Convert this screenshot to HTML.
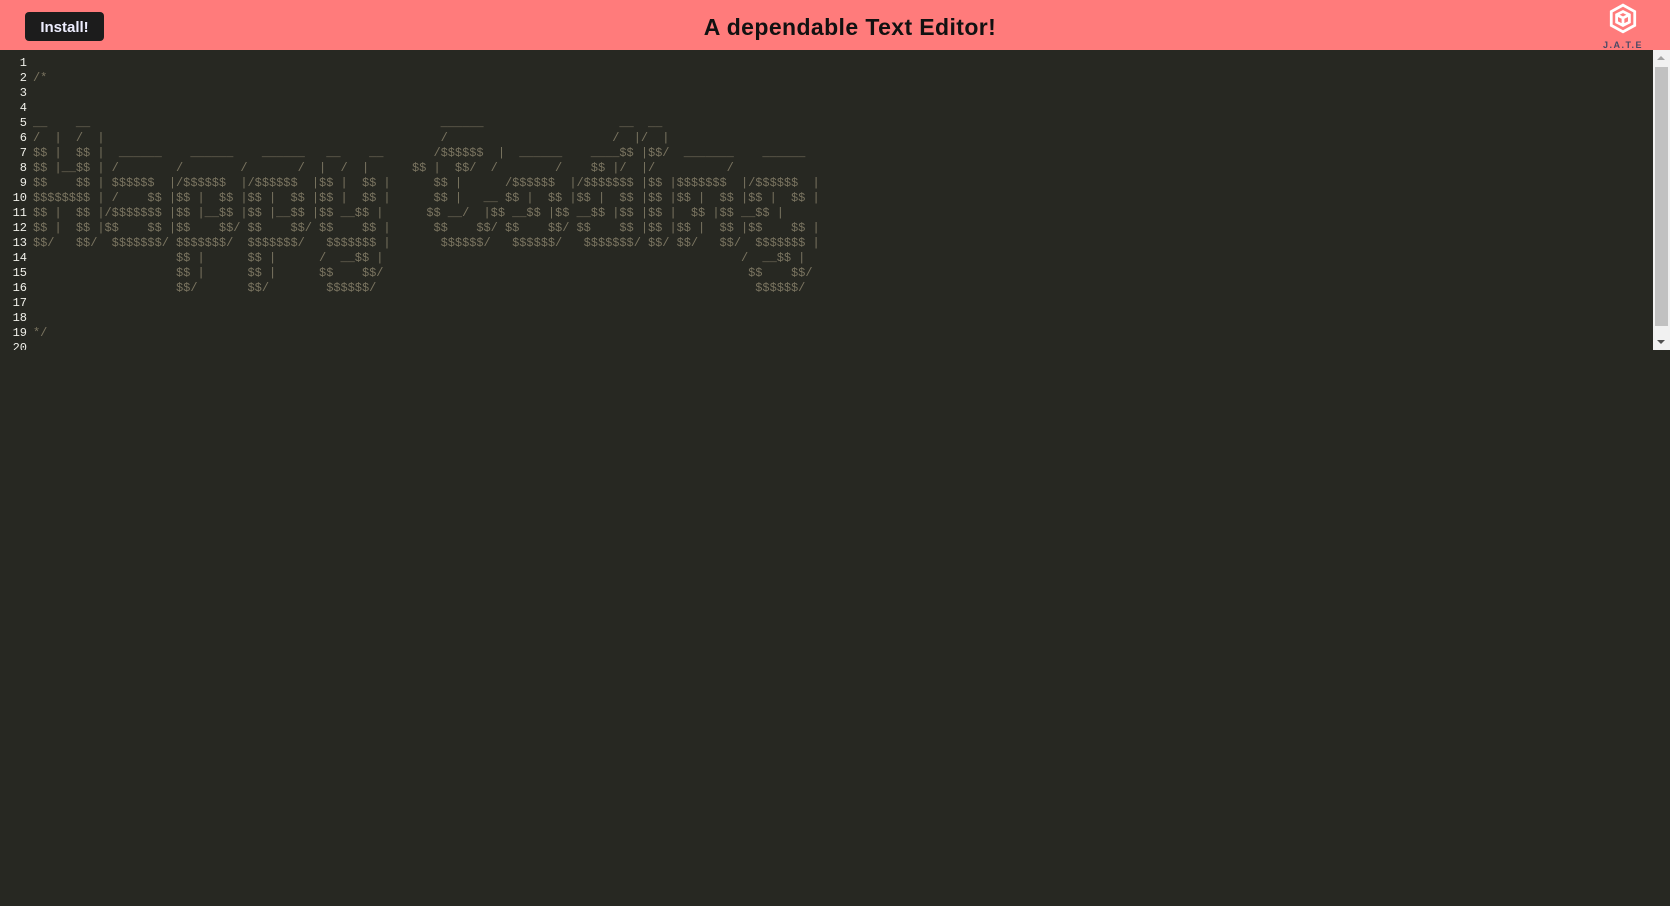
<!DOCTYPE html>
<html><head><meta charset="utf-8"><style>
html,body{margin:0;padding:0;width:1670px;height:906px;overflow:hidden;background:#272822;}
.hdr{position:absolute;left:0;top:0;width:1670px;height:50px;background:#ff7b7b;}
.btn{position:absolute;left:25px;top:12px;width:79px;height:29px;background:#1c1c1c;border-radius:4px;color:#eef;font:bold 15px "Liberation Sans",sans-serif;line-height:31px;text-align:center;}
.title{position:absolute;left:0;width:1700px;top:14px;text-align:center;font:bold 23px "Liberation Sans",sans-serif;color:#111;letter-spacing:0.4px;}
.logo{position:absolute;left:1598px;top:3px;width:50px;text-align:center;}
.jate{font:bold 9px "Liberation Sans",sans-serif;color:#4a4a66;letter-spacing:1.5px;margin-top:0px;}
.ed{position:absolute;left:0;top:50px;width:1653px;height:300px;overflow:hidden;}
.gut{position:absolute;left:0;top:6px;width:27px;text-align:right;font:12px/15px "Liberation Mono",monospace;color:#f0f0ea;white-space:pre;}
.code{position:absolute;left:33px;top:6px;font:12px/15px "Liberation Mono",monospace;color:#7a7460;white-space:pre;letter-spacing:-0.05px;}
.sb{position:absolute;left:1653px;top:50px;width:17px;height:300px;background:#f1f1f1;}
.th{position:absolute;left:2px;top:17px;width:13px;height:259px;background:#c1c1c1;}
.up{position:absolute;left:4px;top:6px;width:0;height:0;border-left:4px solid transparent;border-right:4px solid transparent;border-bottom:4px solid #a3a3a3;}
.dn{position:absolute;left:4px;top:290px;width:0;height:0;border-left:4px solid transparent;border-right:4px solid transparent;border-top:4px solid #505050;}
</style></head><body>
<div class="hdr">
<div class="btn">Install!</div>
<div class="title">A dependable Text Editor!</div>
<div class="logo">
<svg width="30" height="32" viewBox="0 0 28 30"><g fill="none" stroke="#fff" stroke-width="2.6" stroke-linejoin="miter"><path d="M14 2 L25 8 L25 21 L14 27 L3 21 L3 8 Z"/><path d="M8 11 L14 8 L20 11 L20 18 L14 21 L8 18 Z M8 11 L14 14 L20 11 M14 14 L14 21"/></g></svg>
<div class="jate">J.A.T.E</div>
</div>
</div>
<div class="ed">
<div class="gut">1
2
3
4
5
6
7
8
9
10
11
12
13
14
15
16
17
18
19
20</div>
<div class="code">
/*


__    __                                                 ______                   __  __
/  |  /  |                                               /                       /  |/  |
$$ |  $$ |  ______    ______    ______   __    __       /$$$$$$  |  ______    ____$$ |$$/  _______    ______
$$ |__$$ | /        /        /       /  |  /  |      $$ |  $$/  /        /    $$ |/  |/          /
$$    $$ | $$$$$$  |/$$$$$$  |/$$$$$$  |$$ |  $$ |      $$ |      /$$$$$$  |/$$$$$$$ |$$ |$$$$$$$  |/$$$$$$  |
$$$$$$$$ | /    $$ |$$ |  $$ |$$ |  $$ |$$ |  $$ |      $$ |   __ $$ |  $$ |$$ |  $$ |$$ |$$ |  $$ |$$ |  $$ |
$$ |  $$ |/$$$$$$$ |$$ |__$$ |$$ |__$$ |$$ __$$ |      $$ __/  |$$ __$$ |$$ __$$ |$$ |$$ |  $$ |$$ __$$ |
$$ |  $$ |$$    $$ |$$    $$/ $$    $$/ $$    $$ |      $$    $$/ $$    $$/ $$    $$ |$$ |$$ |  $$ |$$    $$ |
$$/   $$/  $$$$$$$/ $$$$$$$/  $$$$$$$/   $$$$$$$ |       $$$$$$/   $$$$$$/   $$$$$$$/ $$/ $$/   $$/  $$$$$$$ |
                    $$ |      $$ |      /  __$$ |                                                  /  __$$ |
                    $$ |      $$ |      $$    $$/                                                   $$    $$/
                    $$/       $$/        $$$$$$/                                                     $$$$$$/


*/
</div>
</div>
<div class="sb"><div class="up"></div><div class="th"></div><div class="dn"></div></div>
</body></html>
